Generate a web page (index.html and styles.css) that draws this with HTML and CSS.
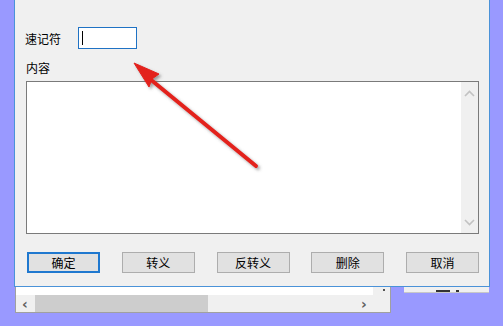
FILE: index.html
```html
<!DOCTYPE html>
<html lang="zh-CN">
<head>
    <meta charset="UTF-8">
    <title>速记符</title>
    <link rel="stylesheet" href="styles.css">
</head>
<body>
<div class="desktop">
    <div class="back-window">
        <div class="back-body">
            <div class="back-blank"></div>
            <div class="hscroll">
                <span class="hs-arrow">&#8249;</span>
                <div class="hs-track"><div class="hs-thumb"></div></div>
                <span class="hs-arrow">&#8250;</span>
            </div>
        </div>
        <div class="back-corner"><span class="dot"></span></div>
    </div>
    <div class="back-window-right"><span class="mark"></span><span class="mark short"></span></div>

    <div class="dialog">
        <div class="field-row">
            <label class="field-title">速记符</label>
            <div class="text-input"><span class="caret"></span></div>
        </div>
        <div class="memo-title">内容</div>
        <div class="memo">
            <div class="memo-text"></div>
            <div class="vscroll">
                <svg class="chev" width="11" height="7" viewBox="0 0 11 7"><path d="M1 6 L5.5 1.5 L10 6" fill="none" stroke="#c2c2c2" stroke-width="1.6"/></svg>
                <svg class="chev" width="11" height="7" viewBox="0 0 11 7"><path d="M1 1 L5.5 5.5 L10 1" fill="none" stroke="#c2c2c2" stroke-width="1.6"/></svg>
            </div>
        </div>
        <div class="button-group">
            <button class="btn default">确定</button>
            <button class="btn">转义</button>
            <button class="btn">反转义</button>
            <button class="btn">删除</button>
            <button class="btn">取消</button>
        </div>
    </div>

    <svg class="pointer" width="503" height="326" viewBox="0 0 503 326">
        <defs>
            <filter id="shadow" x="-20%" y="-20%" width="140%" height="140%">
                <feDropShadow dx="2" dy="2" stdDeviation="1.5" flood-color="#555" flood-opacity="0.55"/>
            </filter>
        </defs>
        <g filter="url(#shadow)" fill="#e3201b" stroke="#e3201b">
            <line x1="256" y1="166" x2="150" y2="79" stroke-width="4" stroke-linecap="round"/>
            <path d="M134 63 L159 74 L152 79 L149 87 Z" stroke-width="1" stroke-linejoin="round"/>
        </g>
    </svg>
</div>
</body>
</html>
```
FILE: styles.css
```css
* {
    box-sizing: border-box;
}

body {
    margin: 0;
    background: #9999ff;
    font: 12px "Noto Sans CJK SC", "Microsoft YaHei", sans-serif;
    color: #000;
}

.desktop {
    position: relative;
    width: 503px;
    height: 326px;
    overflow: hidden;
}

/* windows behind the dialog */
.back-window {
    position: absolute;
    left: 15px;
    top: 285px;
    width: 376px;
    height: 28px;
    display: flex;
    background: #fff;
    border: 1px solid #a0a0a0;
    border-top: none;
}

.back-body {
    flex: 1;
}

.back-blank {
    height: 10px;
}

.hscroll {
    display: flex;
    align-items: center;
    height: 17px;
    background: #f0f0f0;
}

.hs-arrow {
    width: 18px;
    text-align: center;
    font: bold 14px "DejaVu Sans", sans-serif;
    line-height: 16px;
    color: #606060;
}

.hs-track {
    flex: 1;
    height: 17px;
    padding-left: 1px;
}

.hs-thumb {
    width: 173px;
    height: 17px;
    background: #cdcdcd;
}

.back-corner {
    width: 17px;
    background: #f0f0f0;
    padding: 4px 0 0 10px;
}

.dot {
    display: block;
    width: 2px;
    height: 2px;
    background: #555;
}

.back-window-right {
    position: absolute;
    left: 404px;
    top: 285px;
    width: 85px;
    height: 8px;
    background: #f0f0f0;
    border-bottom: 1px solid #c8c8c8;
    display: flex;
    gap: 6px;
    padding-left: 32px;
}

.mark {
    display: block;
    width: 14px;
    height: 2px;
    margin-top: 5px;
    background: #333;
}

.mark.short {
    width: 3px;
}

/* dialog */
.dialog {
    position: absolute;
    left: 14px;
    top: -1px;
    width: 476px;
    height: 288px;
    background: #f0f0f0;
    border: 1px solid #4a92d8;
    padding-top: 27px;
}

.field-row {
    display: flex;
    align-items: center;
    height: 22px;
    padding-left: 10px;
}

.field-title {
    width: 53px;
}

.text-input {
    width: 59px;
    height: 22px;
    background: #fff;
    border: 1px solid #1f72c4;
    padding: 3px 0 0 3px;
}

.caret {
    display: block;
    width: 1px;
    height: 14px;
    background: #000;
}

.memo-title {
    margin: 12px 0 0 11px;
    line-height: 14px;
}

.memo {
    display: flex;
    margin: 6px 0 0 11px;
    width: 453px;
    height: 153px;
    background: #fff;
    border: 1px solid #7a7a7a;
}

.memo-text {
    flex: 1;
}

.vscroll {
    width: 17px;
    background: #f0f0f0;
    display: flex;
    flex-direction: column;
    justify-content: space-between;
    align-items: center;
    padding: 8px 0 7px;
}

.button-group {
    display: flex;
    justify-content: space-between;
    margin: 18px 0 0 12px;
    width: 452px;
}

.btn {
    width: 73px;
    height: 21px;
    padding: 0;
    background: #e1e1e1;
    border: 1px solid #adadad;
    font: 12px "Noto Sans CJK SC", "Microsoft YaHei", sans-serif;
    color: #000;
}

.btn.default {
    border: 2px solid #1f78cf;
}

.pointer {
    position: absolute;
    left: 0;
    top: 0;
}
```
